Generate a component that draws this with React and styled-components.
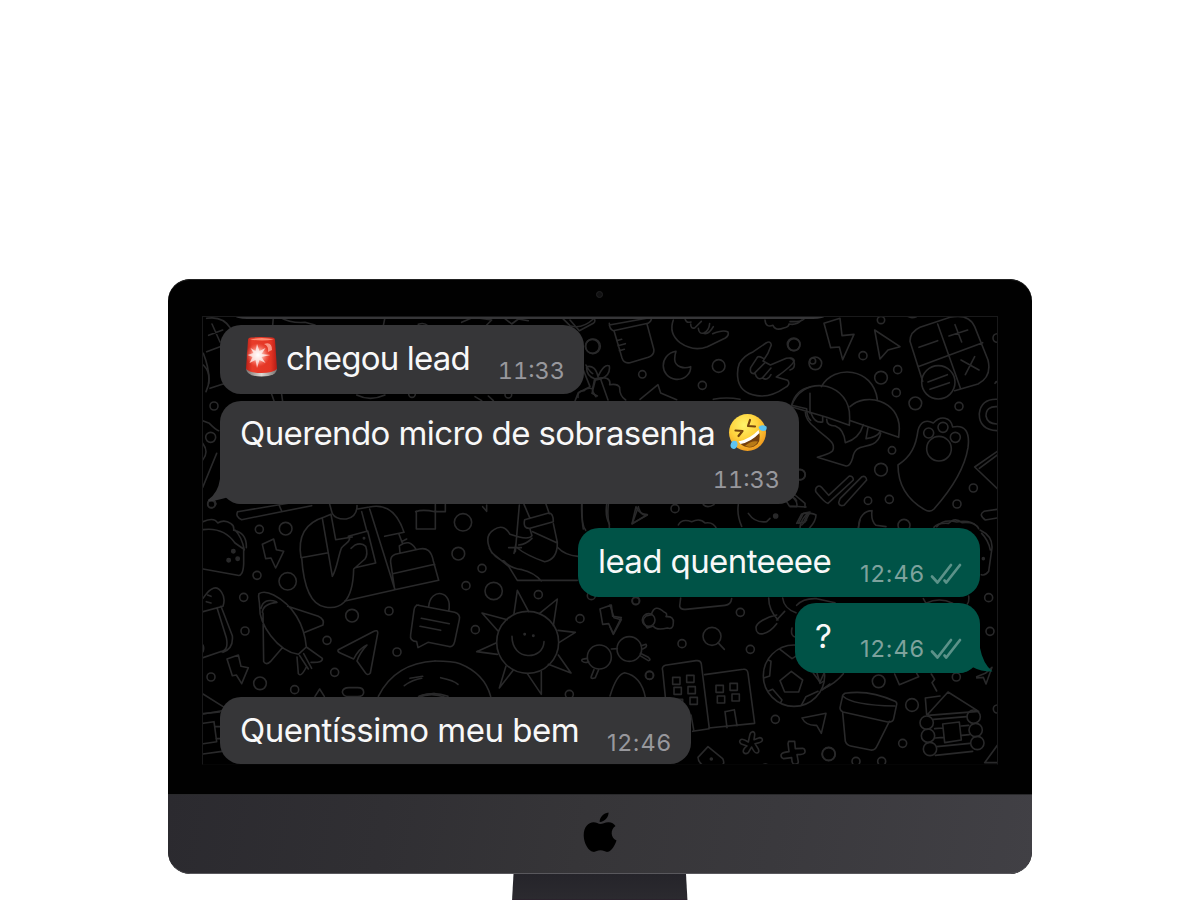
import React from "react";
import styled, { createGlobalStyle } from "styled-components";

const Global = createGlobalStyle`
  * { box-sizing: border-box; }
  body { margin: 0; background: #fff; }
`;

const Page = styled.main`
  width: 1200px;
  height: 900px;
  padding-top: 279px;
  overflow: hidden;
  display: flex;
  flex-direction: column;
  align-items: center;
  background: #fff;
  font-family: Inter, "Liberation Sans", sans-serif;
`;

const Monitor = styled.section`
  width: 864px;
  height: 595px;
  flex: none;
  display: flex;
  flex-direction: column;
  border-radius: 22px;
  overflow: hidden;
  background: #010101;
`;

const Bezel = styled.div`
  height: 515px;
  display: flex;
  flex-direction: column;
  align-items: center;
  box-shadow: inset 0 1px 0 #222;
  border-radius: 22px 22px 0 0;
`;

const Camera = styled.div`
  width: 7px;
  height: 7px;
  margin: 12px 2px 18px 0;
  border-radius: 50%;
  background: #111112;
  border: 1px solid #222223;
`;

const Screen = styled.div`
  position: relative;
  width: 796px;
  height: 449px;
  overflow: hidden;
  background: #000;
  border: 1px solid #19191a;
  border-bottom-color: #050505;
`;

const Wallpaper = styled.svg`
  position: absolute;
  left: -1px;
  top: -1px;
  fill: none;
  stroke: #29292a;
  stroke-width: 4.8;
  stroke-linejoin: round;
  stroke-linecap: round;
`;

const Chat = styled.div`
  position: relative;
  display: flex;
  flex-direction: column;
  padding: 0 17px;
`;

const PreviousBubble = styled.div`
  width: 590px;
  height: 3px;
  margin: -1px 0 6px 15px;
  background: #363638;
  border-radius: 0 0 12px 12px / 0 0 3px 3px;
`;

const Bubble = styled.article`
  position: relative;
  align-self: ${(p) => (p.$sent ? "flex-end" : "flex-start")};
  width: ${(p) => p.$w}px;
  height: ${(p) => p.$h || 69}px;
  margin-bottom: ${(p) => p.$gap || 0}px;
  padding: ${(p) => (p.$stacked ? "12px" : "13px")} ${(p) => (p.$sent ? "18px" : "19px")} 0 20px;
  display: flex;
  flex-direction: ${(p) => (p.$stacked ? "column" : "row")};
  justify-content: space-between;
  border-radius: 21px;
  background: ${(p) => (p.$sent ? "#005347" : "#363638")};
`;

const Message = styled.span`
  display: flex;
  align-items: center;
  height: 41px;
  color: #f8f8f8;
  font-size: 33px;
  line-height: 41px;
  white-space: pre;
  letter-spacing: ${(p) => p.$ls || 0}px;
`;

const Meta = styled.span`
  position: relative;
  display: flex;
  align-items: center;
  align-self: flex-end;
  height: 28px;
  margin-bottom: ${(p) => p.$mb ?? 9}px;
  gap: 5px;
  color: ${(p) => (p.$sent ? "#7ea29d" : "#98989d")};
  font-size: 23.5px;
  line-height: 28px;
  font-variant-numeric: ${(p) => (p.$tabular ? "tabular-nums" : "normal")};
  letter-spacing: ${(p) => p.$ls ?? 0.9}px;
`;

const Tail = styled.svg`
  position: absolute;
  bottom: 0;
  ${(p) => (p.$sent ? "right: -13px;" : "left: -13px;")}
  fill: ${(p) => (p.$sent ? "#005347" : "#363638")};
`;

const Chin = styled.div`
  height: 80px;
  display: flex;
  justify-content: center;
  padding-top: 17px;
  background: linear-gradient(100deg, #2b2a2f 0%, #302f33 25%, #363538 48%, #3a393d 70%, #414045 100%);
  border-top: 1px solid #29292b;
  border-bottom: 1px solid #59585d;
  border-radius: 0 0 22px 22px;
`;

const Stand = styled.div`
  width: 176px;
  height: 27px;
  flex: none;
  background: linear-gradient(#25242a, #2b2a2f 92%, #2b1028);
  clip-path: polygon(1.5px 0, 174px 0, 175.5px 100%, 0 100%);
`;

const Circles = ({ list }) => list.map(([x, y, r], i) => <circle key={i} cx={x} cy={y} r={r} />);

const Zone = ({ x, y, children }) => <g transform={`translate(${x} ${y}) scale(.33333)`}>{children}</g>;

const Doodles = () => (
  <Wallpaper width="796" height="449" viewBox="202 316 796 449">
    {/* top left: calculator, plants */}
    <Zone x={160} y={270}>
      <path d="M140 145q48-8 72 30M140 245l48-18M146 196l42-16M156 162l24 54M130 250q20 50 16 90M150 355l60-20M340 142l-2 25M360 142q30 18 75 15l30 8M675 142l-5 25M905 157l35-15 55 8-15 15M1030 142l25 20 20-15 30 5M1205 142l25 25q35 12 70-20" />
      <path d="M130 285q30 30 8 80M335 373l8 22M365 373l3 22M590 375q40 20 85 0M945 380l20 12M985 378l15 14M1270 300l20 50-35 18-10 25M1300 350q-8 10 8 30" />
      <path d="M128 452l20 8q20 20 28 22M128 520q20 25 0 50M170 550L128 652M148 690q12-5 20 12M775 163a28 28 0 0 1 30 5" />
      <Circles list={[[162, 408, 12], [152, 502, 15], [154, 703, 11], [1297, 229, 21], [756, 372, 10], [1045, 374, 10]]} />
    </Zone>
    {/* jar, hands, moon */}
    <Zone x={570} y={310}>
      <path d="M0 30l28 32 42-22q8-5 2-16M118 45l112-20M118 40q0 18 12 22l104-22q12-8 10-16M132 62l24 82q6 18 24 14l55-16q20-8 16-26l-20-74M140 92l15-4M144 107l22-6M148 122l15-4" />
      <path d="M310 30q-15 40 20 68 40 28 82 12l54-26q12-8 8-18-14-8-46 5M345 26q4 14 18 10M362 42q0 15 12 12l20-20M385 55q2 18 16 14 16-6 18-28M400 70q16 5 30-20" />
      <path d="M318 124c-52 10-50 78 0 84 27 2 45-18 44-38-20 7-47 2-48-22 0-10 2-18 4-24z" />
      <path d="M585 30q2 24 24 16 8 18 32 8 16-3 16-12 22 5 38-12M508 160q16-25 42-35l38-26q14-8 16 6-8 26-25 48l22 12 48-20q22-4 24 8-8 16-54 48l34 10q10 12-8 22-42 30-84 24-54-8-58-56-2-24 5-41z" />
      <path d="M580 145q-16-10-20 0l-18 28q-4 18 10 18l32-32M555 190q6 22 22 14l26-30M578 204q14 10 25-10" />
      <path d="M24 262q-2-20 18-20 8-10 26-6l6-30q-26-8-24-36 26-6 34 30 18-40 34-32 4 28-24 38l-16 4M75 206q50-10 44 18 24-4 30 8-1 25 18 38M76 210l-10 40 16 8M92 208l22 62M48 165q10 20 20 26M210 268l54-44 8 25 48 20M430 268q40-8 80 0M665 285q12-45 55-54M720 250v60M665 286l45 10q0 25 12 35" />
      <path d="M36 582q0 60 4 75M110 584q-5 35 8 58v18M205 590l-18 50 45-25q-20 4-27-25zM325 645q10-20 40-10 25-12 40 4 25-5 35 18M505 584q-5 30 10 65M535 610q20 30 55 25l10-10" />
      <Circles list={[[69, 109, 22], [446, 168, 19], [217, 193, 11], [397, 226, 12], [671, 103, 19], [315, 596, 12], [690, 494, 16], [728, 153, 9]]} />
      <circle cx="617" cy="618" r="6" fill="#29292a" />
      <path d="M400 584q12 12 32 0M640 560l18 28 50 3M650 555q25 5 30 18M685 640l15-30 20-4-15 30z" />
    </Zone>
    {/* right: bolt, cursor, calculator, tree, paw */}
    <Zone x={790} y={310}>
      <path d="M102 40l48-15 6 52 36-4-34 76-10-38-26 2zM254 60l76 50-36 10-24 27z" />
      <path d="M360 94q0-28 30-42l90-30q56-12 74 28l40 100q12 50-30 72l-70 20M360 94l38 120M443 42l68 192M384 170l194-72M387 112l56-20M477 78l56-18M495 44l20 52M513 150l54 30M554 140l-28 54M414 216l58-22M420 238l58-20" />
      <circle cx="445" cy="217" r="50" />
      <path d="M4 290c30-94 160-78 174 14q2 18 0 42L110 322 4 290zM94 230c38-68 155-58 168 38M180 290c46-44 148-20 148 66l-2 26-144-50M46 306q0 24 30 48c30 28 64 42 52 68-8 10-24 12-46 20l86 26q12 2 20-24c6-40 34-30 60-42q20-10 24-32M64 312q10 28 34 24v-14M110 328q0 20 26 20 26 10 30 50c28-8 45-24 54-54M234 352l-6 34q32-4 42-20" />
      <path d="M324 465c40-26 54-58 60-104 8-30 28-32 46-22 22-24 52-18 58 12 38-8 52 16 46 62-10 62-54 130-102 184q-12 12-28 2-80-46-80-134z" />
      <circle cx="447" cy="416" r="37" />
      <path d="M82 530q8-6 18 8l16 18 62-58q12 0 12 12l-76 70q-8 0-36-34-4-10 4-16zM150 566l66-66q12-4 14 10l-68 76q-14 4-16-8zM246 602c-20 0-42 16-40 54M246 602q-4 30 12 44l30 4M432 652q10-14 44-12 18-20 40-2 40-4 50 18M622 424l-68 47 68 65M622 435l-54 40M622 598l-40 6q-18 10 4 26l36-6M0 35h20q22-2 24-12M15 555l30 25v12M30 655q0-20 18-40 14-10 30 0 0 18-20 40" />
      <path d="M622 268q-48-2-54 42-2 48 54 52M622 290q-34-2-34 28 4 24 34 24M20 640l15-28 20-4-14 28zM0 590h20q5-15-15-30M0 180q15-4 13-20-3-15-13-15" />
      <Circles list={[[273, 30, 11], [12, 104, 18], [76, 160, 19], [219, 137, 12], [323, 179, 12], [273, 203, 19], [319, 248, 12], [376, 280, 19], [507, 289, 12], [416, 369, 15], [459, 352, 15], [496, 382, 15], [306, 421, 11], [273, 479, 19], [550, 534, 12], [501, 582, 12], [298, 568, 12], [234, 572, 11], [342, 646, 18], [30, 494, 15], [622, 84, 13]]} />
      <path d="M355 20q10 6 24 0M615 220q5-10 8 0" />
    </Zone>
    {/* left middle */}
    <Zone x={195} y={495}>
      <path d="M128 50l210-35M128 50q-8 15 12 24l210-42M252 30l8 18M24 80q34-15 44 4 20-12 40 2 10 5 8 20 40 8 38 52M24 104q62-8 96 40 14 10 26 18v45q-2 38-18 34L24 222M120 105q20 20 28 60" />
      <path d="M202 148l34-16 8 32 22 5-24 50-14-30-16 2z" />
      <path d="M318 188q-16-96 70-122l20-8 14 76 50-8M318 188l78-14M382 70l30 174c14-22 18-64 28-86 10-12 22-16 24-26l-4-8 58-16 24 96-62 14M468 160l12-10q20-8 32 4 8 24-2 38l-34 30c-2 104-44 122-86 114-52-8-66-88-70-148" />
      <path d="M404 28l8 28q10 18 42 16 32-6 32-40M488 42l35-6q74-16 104 76l-58 12M500 50l16 60M524 42l76 242-150 34M612 118l10 26M587 202q-2-18 14-24l72-16q34-8 42 36l16 58-132 28zM593 236l126-28M615 173l-2-20q30-24 50 10M620 140l15-8M662 50q20-8 58 0M664 48v54h55" />
      <path d="M192 296q16-10 44 4c58 30 92 88 98 156l-24 22c-64-10-118-92-116-142 0-24-6-30-2-40zM204 354l2 146q8 12 20 0l36-42M278 334l92 30q20 10 14 26l-54 22M202 352q2-26 44-30M198 340q8-32 46-20M334 456l48 34q2 14-34 12M306 486l4 50q8 12 24-20M326 476l24 44M314 482l26 40" />
      <path d="M24 310q34-52 56-18 12 18 4 42L24 350M66 338l28 90q8 40-18 42L24 488M78 334l34 88q4 38-28 50M38 300l10 4M34 320l14 4M430 464l104-54q16-8 14 6l-22 118q-8 10-16-2l-24-34q8-24 30-48-24 10-40 42l-40-18q-10-4-6-10z" />
      <path d="M96 492l34-12 8 34 22 4-20 48-16-26-12 2zM360 604l14-22 14 22M462 578h26q18 0 18 14 0 13-18 13h-26q-18 0-20-14 2-13 20-13zM24 597l64 40M24 656l50-5M550 604q50-100 170-106M628 572q25-18 52-22M672 604q20-8 48-8" />
      <Circles list={[[193, 103, 12], [272, 101, 19], [186, 241, 12], [278, 259, 26], [146, 307, 12], [150, 408, 12], [471, 362, 19], [582, 348, 12], [396, 436, 12], [606, 471, 12], [419, 532, 12], [299, 584, 12], [195, 565, 19], [48, 546, 12], [50, 26, 12]]} />
      <g fill="#29292a"><Circles list={[[115, 169, 5], [101, 196, 5], [128, 191, 5]]} /><circle cx="507" cy="130" r="2" /></g>
      <path d="M24 450q4 10 0 20" />
    </Zone>
    {/* shoe, sun, glasses */}
    <Zone x={410} y={495}>
      <path d="M76 28v22h30V28M218 35l12 14V30" />
      <path d="M76 46v56" />
      <path d="M328 30l-12 140M342 28l18 42M408 28l10 28M344 74l72-20q14 0 14 26l-70 20q-22 2-16-26zM360 102l6 20q-10 16-66-4-20-34-48-14-34 20-6 70l50 40 26 42h180M430 86l12 56M368 110l74 34q0 50-38 56-54-18-86-44M366 130q-18 18-40 20M296 158h38M318 145l-6 30M238 160q16 30 44 38 18 22 54 26 36 8 58 34M444 158q20 22 60 26M515 28q-2 60 12 78M595 28q-4 40 3 60M678 35l-12 52 46-28q-26-2-34-24z" />
      <circle cx="353" cy="442" r="93" />
      <path d="M312 356l10-70 34 64M388 356l54-44-12 80M444 406l52 6-48 30M445 480l38 54-68-26M394 530v68l-42-62M310 525l-42 54 20-66M262 478l-62-8 58-26M264 408l-48-54 76 20M306 424c0 76 94 72 96 16" />
      <path d="M20 330l114 22q18 6 14 22l-14 66q-4 18-20 14l-60-12-30 16-4-18q-22-2-18-22l10-72q2-16 14-16M34 370l84 16M30 394l62 12M56 334c6-58 74-48 60 14M75 498q54 0 75 8 74 30 92 98M0 550l38-6M92 548q40 8 52 20M30 604q40-16 84 0" />
      <path d="M570 342l34-12 4 34 26 4-24 48-14-30-18 2zM604 462l18-1M694 452l14-4q6 8-10 14M690 482l25 15q10-2 0-10l-24-12M532 490q-20 2-16 8 8 8 20 2M552 524l-8 20q-4 10 12 4l10-24" />
      <Circles list={[[159, 82, 26], [145, 176, 19], [216, 220, 12], [168, 272, 12], [251, 288, 26], [385, 299, 12], [196, 404, 12], [510, 371, 12], [568, 486, 36], [658, 462, 37], [478, 598, 12], [544, 302, 12], [678, 317, 11], [716, 375, 19], [718, 541, 12]]} />
      <g fill="#29292a"><circle cx="344" cy="418" r="2" /><circle cx="370" cy="422" r="2" /></g>
    </Zone>
    {/* buildings, football */}
    <Zone x={610} y={570}>
      <path d="M212 84l-3 24q2 12 18 10l118-12q18-2 20-20M108 168q-16-16 0-30l16-4q10-34 38-8 12 4 6 14 24-2 22 18 0 22-18 16-34 8-42-6l-18 6z" />
      <path d="M324 218l19 20M158 302q-4-12 8-16l92-14q14-2 16 10l24 194-50 8M158 302l8 78M284 314l116-16q12-2 14 12l20 150-138 14M345 425l28-6 8 48M345 425l6 48M243 435l8 44" />
      {[[188, 322], [230, 316], [192, 352], [234, 350], [196, 388], [240, 382], [318, 346], [360, 340], [322, 378], [366, 372]].map(([x, y]) => <rect key={`${x}-${y}`} x={x} y={y} width="22" height="21" />)}
      <circle cx="552" cy="317" r="92" />
      <path d="M510 332l34-28 34 26-12 36h-42zM475 270l8 4-4 44-18 6M474 364l14-6 28 32-4 8M510 238l36 28 16-10M574 406l14-26 36-16M640 300l-20 6 10 34 10-6M476 84q0 36 28 66M518 84q4 32 40 44M500 150l24-26M500 135c-30 5-62 24-62 38 0 30 36 22 62-12M546 174q-6 25 12 28M636 360l24-18" />
      <path d="M576 444l72-14-14 60-14-24q-32 2-44-22zM427 485q8 0 7 10l-2 14 16-6q10 0 9 8-1 6-22 10l10 16q4 10-4 12-7 2-16-18l-10 17q-8 6-14 0-5-8 10-20l-17-6q-8-6-3-12 6-6 24 6l4-20q2-10 8-11zM536 514h18l2 22 22-1q8 2 7 11 0 8-24 8l4 22q0 6-10 7-10 0-10-20l-24 3q-8-2-8-11 2-8 24-10l-3-24zM264 562l30-32 44 36q8 16-4 20M264 562q0 12 12 22M0 378q20-66 44-70 50 10 62 74M0 105l12 38 22 6-24 44-10-22" />
      <Circles list={[[77, 93, 11], [391, 127, 12], [306, 199, 27], [216, 221, 12], [421, 238, 12], [119, 316, 12], [496, 448, 12], [656, 552, 20], [466, 594, 12]]} />
      <circle cx="304" cy="567" r="3" fill="#29292a" />
    </Zone>
    {/* pot, cabin */}
    <Zone x={790} y={520}>
      <path d="M165 520q72-12 150 24 8 4 4 14l-8 38q-2 12-18 10l-134-30q-12-6-8-18l6-26q0-8 8-12zM158 528q30 28 156 30M158 578l8 86q4 12 16 14l60 12q14 2 20-14l36-72" />
      <path d="M410 584l-4-50 44-6M414 582l60-66 92 58-152 12M430 598l100-8M434 626l24-2M514 618l22-2M436 654l24-2M516 646l22-2M440 680l100-10M436 706l112-12M458 612l50-6 6 54-50 8z" />
      <path d="M314 462l14 32 58-24-6-10M424 462l10 16-8 10 14 25M462 448h30M560 470l26-10 20-18-18 50-8-20-20 2M570 30q38 18 36 54l-10 70q-10 14-22 10M575 40q20 20 26 50M400 236l8 14q40-20 80 0M536 228q2 18-4 24M20 256q20-22 60-20l55 12M70 460l20 26 12-26M100 506q35-15 60-45M622 676l-38 52h38" />
      <Circles list={[[266, 484, 19], [366, 555, 19], [499, 471, 12], [596, 233, 12], [600, 334, 12], [338, 670, 12], [116, 702, 19], [198, 724, 12], [275, 724, 12], [410, 608, 20], [414, 647, 20], [420, 687, 20], [551, 590, 20], [557, 630, 20], [562, 669, 20], [622, 567, 12]]} />
      <circle cx="580" cy="116" r="3" fill="#29292a" />
      <path d="M50 0l-15 15M210 0l-5 22M440 20q20-24 60-14 40-8 60 12" />
    </Zone>
    {/* bottom left cabin */}
    <Zone x={160} y={690}>
      <path d="M128 72l58-10M130 100l32-5 8 60-40 6M165 110h15M168 146h14M128 192l58-8M775 22q40-16 80 0" />
    </Zone>
  </Wallpaper>
);

const SirenArt = styled.svg`
  flex: none;
  margin: -3px 7px 0 5px;
`;

const Siren = () => (
  <SirenArt width="34" height="42" viewBox="0 0 34 42">
    <defs>
      <linearGradient id="sirenRed"><stop stopColor="#b91f16" /><stop offset=".2" stopColor="#e83c2a" /><stop offset=".8" stopColor="#e43524" /><stop offset="1" stopColor="#b41c16" /></linearGradient>
      <linearGradient id="sirenBase" x2="1"><stop stopColor="#77716e" /><stop offset=".5" stopColor="#dedad5" /><stop offset="1" stopColor="#77716e" /></linearGradient>
      <radialGradient id="sirenGlow"><stop stopColor="#fff" /><stop offset=".45" stopColor="#ffc1b6" stopOpacity=".75" /><stop offset="1" stopColor="#ff7060" stopOpacity="0" /></radialGradient>
    </defs>
    <path d="M1 32q0 8.500 15.500 8.500T32 32z" fill="url(#sirenBase)" />
    <path d="M3 4q0-2 3-2.400 10-1 21 0 3 .4 3 2.400l2 29Q28 37 16.500 37T1 33z" fill="url(#sirenRed)" />
    <path d="M5 3.500q12-3 24 0-12 2-24 0" fill="#ff8a70" />
    <path d="M19 8q8-3 8 6l-4 2q1-6-4-8z" fill="#ffad9c" opacity=".8" />
    <circle cx="13" cy="19" r="12" fill="url(#sirenGlow)" />
    <path d="M12 8l2.500 7 6-3-4 6 9 1-9 2 4 6-6-3-2.500 8-1.500-8-6 3 3-6-5-2 6-2-3-5 5 3z" fill="#fff" opacity=".7" />
  </SirenArt>
);

const LaughArt = styled.svg`
  flex: none;
  margin: -1px 0 0 4.5px;
`;

const Laugh = () => (
  <LaughArt width="40" height="40" viewBox="0 0 40 40">
    <defs>
      <radialGradient id="faceGold" cx=".4" cy=".3" r=".75"><stop stopColor="#fff36b" /><stop offset=".5" stopColor="#ffd23c" /><stop offset="1" stopColor="#ee951c" /></radialGradient>
    </defs>
    <circle cx="19.500" cy="19.500" r="18.500" fill="url(#faceGold)" />
    <path d="M11 29.500Q22 28 31 18q3 12-5 15.500-8 3-15-4z" fill="#75400d" />
    <path d="M10.500 28.500Q22 26 30.500 17l1 3Q23 29 12.500 31z" fill="#fff" />
    <path d="M17 33q6-6 13-4.500-3 5-8.500 5.500z" fill="#b97a16" />
    <g fill="none" stroke="#75440d" strokeWidth="2.200" strokeLinecap="round" strokeLinejoin="round">
      <path d="M7.500 17.500l7 .5-4 5M22 7l-2 6 7 .5" />
    </g>
    <path d="M30.500 14q3-3 8-.5 1 4.500-3 4.500-4 0-5-4zM4.500 28q5.500-1 5 4-2 6-6 3-2.500-3 1-7z" fill="#5cc3f2" />
  </LaughArt>
);

const TicksArt = styled.svg`
  flex: none;
`;

const Ticks = () => (
  <TicksArt width="32" height="24" viewBox="0 0 32 24" fill="none" stroke="#5b9289" strokeWidth="2.700" strokeLinecap="round" strokeLinejoin="round">
    <path d="M2 14.500l5.500 6L21 3M14.500 18.500l1.800 2L30 3" />
  </TicksArt>
);

const Apple = () => (
  <svg width="34" height="42" viewBox="0 0 34 42">
    <path d="M25.500 0.500c.5 4-4 9.500-8.800 9.400-.5-4.200 4-8.900 8.800-9.400z" />
    <path d="M17.300 12c2 0 5-2 8.500-1.800 2.800.2 5.200 1.300 6.700 3.700-5.600 3.600-4.800 12 1 14.500-1.400 4.200-4.700 10.500-8.300 11.400-3 .6-4.200-1.500-7.700-1.500s-4.800 2-7.500 1.500C5.500 39 .8 31.500.7 23.500.6 15 5.500 10.400 10.500 10.300c2.900 0 5 1.700 6.800 1.700z" />
  </svg>
);

const InTail = () => (
  <Tail width="36" height="42" viewBox="0 0 36 42">
    <path d="M13 0v17Q11 31 1 38q0 2 5 1 9-2 16-4 5 7 14 7V0z" />
  </Tail>
);

const OutTail = () => (
  <Tail $sent width="36" height="42" viewBox="0 0 36 42">
    <path d="M23 0v17Q26 33 35.500 40.500q-12 0-20-4.500Q10 42 0 42V0z" />
  </Tail>
);

export default function App() {
  return (
    <Page>
      <Global />
      <Monitor>
        <Bezel>
          <Camera />
          <Screen>
            <Doodles />
            <Chat>
              <PreviousBubble />
              <Bubble $w={364} $gap={7}>
                <Message $ls={-0.8}><Siren />chegou lead</Message>
                <Meta $tabular $ls={0}>11:33</Meta>
              </Bubble>
              <Bubble $w={579} $h={103} $gap={24} $stacked>
                <InTail />
                <Message $ls={-0.6}>Querendo micro de sobrasenha <Laugh /></Message>
                <Meta $tabular $ls={0} $mb={10}>11:33</Meta>
              </Bubble>
              <Bubble $w={402} $gap={6} $sent>
                <Message $ls={-0.6}>lead quenteeee</Message>
                <Meta $sent>12:46<Ticks /></Meta>
              </Bubble>
              <Bubble $w={185} $h={70} $gap={24} $sent>
                <OutTail />
                <Message>?</Message>
                <Meta $sent $mb={10}>12:46<Ticks /></Meta>
              </Bubble>
              <Bubble $w={471} $h={67}>
                <Message $ls={-0.48}>Quentíssimo meu bem</Message>
                <Meta $mb={7}>12:46</Meta>
              </Bubble>
            </Chat>
          </Screen>
        </Bezel>
        <Chin><Apple /></Chin>
      </Monitor>
      <Stand />
    </Page>
  );
}
